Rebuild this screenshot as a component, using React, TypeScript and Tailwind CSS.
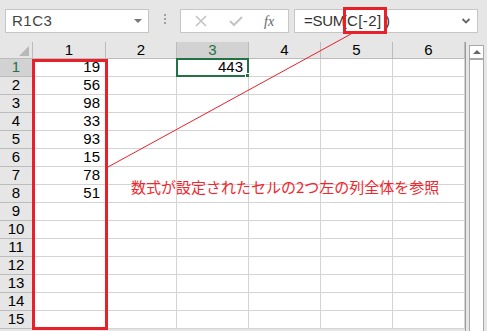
import React from "react";

const cols = [
  { label: "1", w: 73 },
  { label: "2", w: 71 },
  { label: "3", w: 72 },
  { label: "4", w: 72 },
  { label: "5", w: 72 },
  { label: "6", w: 72 },
];

const values: Record<number, string> = {
  1: "19",
  2: "56",
  3: "98",
  4: "33",
  5: "93",
  6: "15",
  7: "78",
  8: "51",
};

const rows = Array.from({ length: 15 }, (_, i) => i + 1);

export default function App() {
  return (
    <div
      className="relative w-[487px] h-[331px] overflow-hidden bg-[#e6e6e6] text-black"
      style={{ fontFamily: '"Liberation Sans", "Noto Sans CJK JP", sans-serif' }}
    >
      {/* 数式バー */}
      <div className="flex items-start h-[42px]">
        <div className="ml-[5px] mt-[9px] w-[144px] h-[24px] bg-white border border-[#c6c6c6] flex items-center justify-between pl-[6px] pr-[6px]">
          <span className="text-[15px] text-[#444] tracking-[0.5px]">R1C3</span>
          <span className="w-0 h-0 border-l-[4px] border-r-[4px] border-t-[4px] border-l-transparent border-r-transparent border-t-[#777]" />
        </div>
        <div className="ml-[15px] mt-[14px] flex flex-col gap-[2px]">
          <span className="w-[2px] h-[2px] bg-[#a0a0a0]" />
          <span className="w-[2px] h-[2px] bg-[#a0a0a0]" />
          <span className="w-[2px] h-[2px] bg-[#a0a0a0]" />
        </div>
        <div className="ml-[14px] mt-[9px] w-[109px] h-[24px] bg-white border border-[#c6c6c6] flex items-center">
          <svg width="12" height="12" viewBox="0 0 12 12" className="ml-[14px]">
            <path d="M1 1 L11 11 M11 1 L1 11" stroke="#c4c4c4" strokeWidth="1.6" />
          </svg>
          <svg width="14" height="12" viewBox="0 0 14 12" className="ml-[22px]">
            <path d="M1 6 L5 10 L13 2" stroke="#c4c4c4" strokeWidth="2" fill="none" />
          </svg>
          <span
            className="ml-[21px] text-[14px] italic text-[#666]"
            style={{ fontFamily: '"Liberation Serif", serif' }}
          >
            fx
          </span>
        </div>
        <div className="ml-[5px] mt-[9px] w-[184px] h-[24px] bg-white border border-[#c6c6c6] flex items-center justify-between pl-[9px] pr-[6px]">
          <span className="flex text-[15px] text-[#333] whitespace-nowrap">
            <span className="w-[38px] tracking-[-0.3px]">=SUM</span>
            <span className="w-[5px]">(</span>
            <span className="w-[38px] tracking-[0.4px]">C[-2]</span>
            <span>)</span>
          </span>
          <svg width="10" height="8" viewBox="0 0 10 8">
            <path d="M1.5 2 L5 5.5 L8.5 2" stroke="#666" strokeWidth="1.8" fill="none" />
          </svg>
        </div>
      </div>

      {/* シート */}
      <div className="flex">
        <div className="w-[466px] border-r border-[#9b9b9b]">
          {/* 列見出し */}
          <div className="flex h-[17px] border-b border-[#bcbcbc]">
            <div className="w-[33px] relative border-r border-[#bcbcbc]">
              <span
                className="absolute right-[3px] bottom-[2px] w-0 h-0"
                style={{ borderBottom: "10px solid #b8b8b8", borderLeft: "10px solid transparent" }}
              />
            </div>
            {cols.map((c) => (
              <div
                key={c.label}
                className={`flex items-center justify-center text-[15px] border-r border-[#bcbcbc] ${
                  c.label === "3" ? "bg-[#d2d2d2] text-[#217346]" : ""
                }`}
                style={{ width: c.w }}
              >
                {c.label}
              </div>
            ))}
          </div>
          {/* 行 */}
          {rows.map((r) => (
            <div key={r} className="flex h-[18px]">
              <div
                className={`w-[33px] flex items-center justify-center text-[15px] border-r border-b border-[#bcbcbc] ${
                  r === 1 ? "bg-[#d2d2d2] text-[#217346]" : ""
                }`}
              >
                {r}
              </div>
              {cols.map((c) => (
                <div
                  key={c.label}
                  className="relative bg-white border-r border-b border-[#d4d4d4] flex items-center justify-end pr-[5px] text-[15px]"
                  style={{ width: c.w }}
                >
                  {c.label === "1" && values[r]}
                  {c.label === "3" && r === 1 && (
                    <>
                      <span className="absolute -left-[1px] -top-[1px] w-[73px] h-[19px] border-2 border-[#217346]" />
                      <span className="relative">443</span>
                      <span className="absolute -right-[3px] -bottom-[3px] w-[6px] h-[6px] bg-[#217346] border border-white" />
                    </>
                  )}
                </div>
              ))}
            </div>
          ))}
        </div>
        {/* スクロールバー */}
        <div className="ml-[3px] mt-[3px] w-[15px] bg-white border border-[#a8a8a8] h-[300px] flex flex-col">
          <div className="h-[14px] border-b-2 border-[#a8a8a8] flex items-center justify-center">
            <span className="w-0 h-0 border-l-[4px] border-r-[4px] border-b-[4px] border-l-transparent border-r-transparent border-b-[#666]" />
          </div>
        </div>
      </div>

      {/* 注釈 */}
      <div className="absolute left-[32px] top-[59px] w-[76px] h-[271px] border-[3px] border-[#e8202a]" />
      <div className="absolute left-[343px] top-[7px] w-[44px] h-[27px] border-[3px] border-[#e8202a]" />
      <svg className="absolute left-0 top-0 pointer-events-none" width="487" height="331">
        <line x1="108" y1="167" x2="351" y2="34" stroke="#e8202a" strokeWidth="1" />
      </svg>
      <div
        className="absolute left-[131px] top-[176px] text-[15px] leading-[22px] text-[#f0282e] whitespace-nowrap"
        style={{ fontFamily: '"Noto Sans CJK JP", sans-serif' }}
      >
        数式が設定されたセルの2つ左の列全体を参照
      </div>
    </div>
  );
}
